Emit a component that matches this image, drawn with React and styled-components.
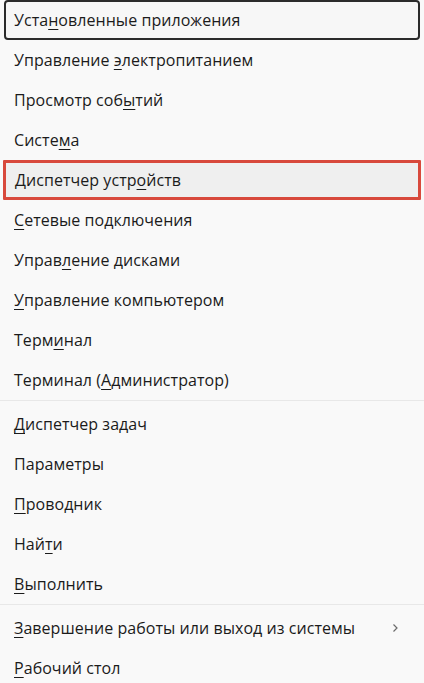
import styled, { createGlobalStyle } from 'styled-components'

const GlobalStyle = createGlobalStyle`
  html, body {
    margin: 0;
    padding: 0;
    background: #f9f9f9;
  }
  body {
    font-family: "Open Sans", "Noto Sans", sans-serif;
    color: #1b1b1b;
  }
`

const Menu = styled.div`
  width: 424px;
  height: 683px;
  overflow: hidden;
  background: #f9f9f9;
  display: flex;
  flex-direction: column;
`

const Item = styled.div`
  box-sizing: border-box;
  height: 40px;
  flex: none;
  display: flex;
  align-items: center;
  justify-content: space-between;
  font-size: 16px;
  letter-spacing: 0.05px;
  margin: 0 ${(p) => (p.selected ? '3px' : '4px')};
  padding: 0 18px 0 ${(p) => (p.selected ? '9px' : '8px')};
  border-radius: ${(p) => (p.selected ? '1px' : '4px')};
  border: ${(p) =>
    p.focused ? '2px solid #2b2b2b' : p.selected ? '3px solid #d8493c' : '2px solid transparent'};
  background: ${(p) => (p.focused ? '#f7f7f7' : p.selected ? '#efefef' : 'transparent')};
`

const Key = styled.span`
  text-decoration: underline;
  text-underline-offset: 3px;
  text-decoration-thickness: 1px;
`

const Divider = styled.div`
  height: 1px;
  flex: none;
  background: #e8e8e8;
  margin: 0 0 3px;
`

const Chevron = styled.svg`
  width: 10px;
  height: 10px;
  flex: none;
`

const Label = ({ text, k }) => {
  if (k == null) return <span>{text}</span>
  return (
    <span>
      {text.slice(0, k)}
      <Key>{text[k]}</Key>
      {text.slice(k + 1)}
    </span>
  )
}

const group1 = [
  ['Установленные приложения', 4],
  ['Управление электропитанием', 11],
  ['Просмотр событий', 12],
  ['Система', 5],
  ['Диспетчер устройств', 14],
  ['Сетевые подключения', 0],
  ['Управление дисками', 5],
  ['Управление компьютером', 0],
  ['Терминал', 4],
  ['Терминал (Администратор)', 10],
]

const group2 = [
  ['Диспетчер задач', 0],
  ['Параметры', null],
  ['Проводник', 0],
  ['Найти', 3],
  ['Выполнить', 0],
]

export default function App() {
  return (
    <>
      <GlobalStyle />
      <Menu>
        {group1.map(([t, k], i) => (
          <Item key={t} focused={i === 0} selected={i === 4}>
            <Label text={t} k={k} />
          </Item>
        ))}
        <Divider />
        {group2.map(([t, k]) => (
          <Item key={t}>
            <Label text={t} k={k} />
          </Item>
        ))}
        <Divider />
        <Item>
          <Label text="Завершение работы или выход из системы" k={0} />
          <Chevron viewBox="0 0 10 10">
            <path d="M3.5 1.5 L7 5 L3.5 8.5" fill="none" stroke="#6b6b6b" strokeWidth="1.2" />
          </Chevron>
        </Item>
        <Item>
          <Label text="Рабочий стол" k={0} />
        </Item>
      </Menu>
    </>
  )
}
